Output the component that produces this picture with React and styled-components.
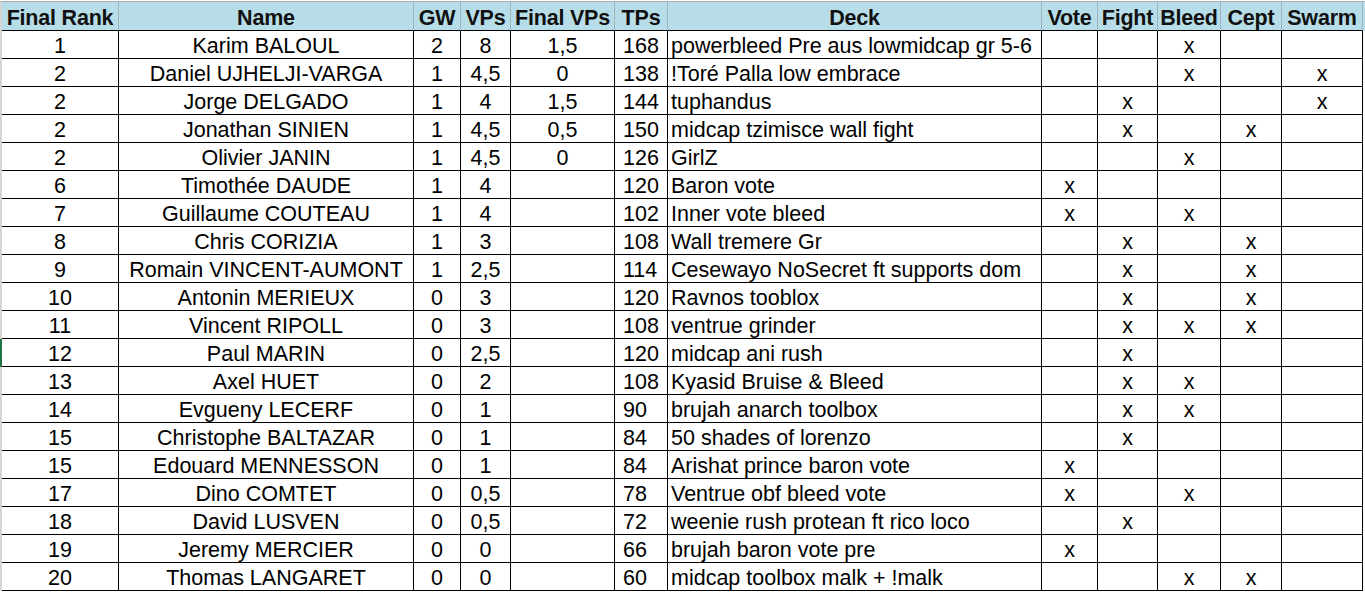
import React from 'react'
import styled, { createGlobalStyle } from 'styled-components'

const GlobalStyle = createGlobalStyle`
  html, body {
    margin: 0;
    padding: 0;
    background: #ffffff;
  }
  body {
    font-family: "Liberation Sans", Arial, sans-serif;
  }
`

const COLS = '117px 295px 47px 50px 104px 53px 374px 56px 60px 63px 61px 81px'

const Sheet = styled.div`
  padding-top: 1px;
  width: 1365px;
  color: #000;
  font-size: 21.5px;
`

const Row = styled.div`
  display: grid;
  grid-template-columns: ${COLS};
  height: ${p => (p.$head ? '29px' : '28px')};
  border-left: 2px solid ${p => (p.$active ? '#217346' : '#d4d4d4')};
  border-top: ${p => (p.$head ? '1px solid #a9a9a9' : 'none')};
  background: ${p => (p.$head ? '#b7dee8' : '#ffffff')};
`

const Cell = styled.div`
  display: flex;
  align-items: center;
  justify-content: ${p => p.$align || 'center'};
  padding-left: ${p => p.$pad || 0};
  padding-top: 3px;
  border-right: 1px solid #000;
  border-bottom: 1px solid #000;
  white-space: nowrap;
  overflow: hidden;
  line-height: 24px;
`

const HeadCell = styled(Cell)`
  font-weight: bold;
  color: #111;
  border-right-color: #9fb3ba;
  letter-spacing: -0.2px;
`

const headers = ['Final Rank', 'Name', 'GW', 'VPs', 'Final VPs', 'TPs', 'Deck', 'Vote', 'Fight', 'Bleed', 'Cept', 'Swarm']

// tags: V vote, F fight, B bleed, C cept, S swarm
const players = [
  ['1', 'Karim BALOUL', '2', '8', '1,5', '168', 'powerbleed Pre aus lowmidcap gr 5-6', 'B'],
  ['2', 'Daniel UJHELJI-VARGA', '1', '4,5', '0', '138', '!Toré Palla low embrace', 'BS'],
  ['2', 'Jorge DELGADO', '1', '4', '1,5', '144', 'tuphandus', 'FS'],
  ['2', 'Jonathan SINIEN', '1', '4,5', '0,5', '150', 'midcap tzimisce wall fight', 'FC'],
  ['2', 'Olivier JANIN', '1', '4,5', '0', '126', 'GirlZ', 'B'],
  ['6', 'Timothée DAUDE', '1', '4', '', '120', 'Baron vote', 'V'],
  ['7', 'Guillaume COUTEAU', '1', '4', '', '102', 'Inner vote bleed', 'VB'],
  ['8', 'Chris CORIZIA', '1', '3', '', '108', 'Wall tremere Gr', 'FC'],
  ['9', 'Romain VINCENT-AUMONT', '1', '2,5', '', '114', 'Cesewayo NoSecret ft supports dom', 'FC'],
  ['10', 'Antonin MERIEUX', '0', '3', '', '120', 'Ravnos tooblox', 'FC'],
  ['11', 'Vincent RIPOLL', '0', '3', '', '108', 'ventrue grinder', 'FBC'],
  ['12', 'Paul MARIN', '0', '2,5', '', '120', 'midcap ani rush', 'F'],
  ['13', 'Axel HUET', '0', '2', '', '108', 'Kyasid Bruise & Bleed', 'FB'],
  ['14', 'Evgueny LECERF', '0', '1', '', '90', 'brujah anarch toolbox', 'FB'],
  ['15', 'Christophe BALTAZAR', '0', '1', '', '84', '50 shades of lorenzo', 'F'],
  ['15', 'Edouard MENNESSON', '0', '1', '', '84', 'Arishat prince baron vote', 'V'],
  ['17', 'Dino COMTET', '0', '0,5', '', '78', 'Ventrue obf bleed vote', 'VB'],
  ['18', 'David LUSVEN', '0', '0,5', '', '72', 'weenie rush protean ft rico loco', 'F'],
  ['19', 'Jeremy MERCIER', '0', '0', '', '66', 'brujah baron vote pre', 'V'],
  ['20', 'Thomas LANGARET', '0', '0', '', '60', 'midcap toolbox malk + !malk', 'BC'],
]

const App = () => {
  return (
    <>
      <GlobalStyle />
      <Sheet>
        <Row $head>
          {headers.map(h => (
            <HeadCell key={h}>{h}</HeadCell>
          ))}
        </Row>
        {players.map((p, i) => {
          const [rank, name, gw, vps, fvps, tps, deck, tags] = p
          return (
            <Row key={i} $active={i === 11}>
              <Cell>{rank}</Cell>
              <Cell>{name}</Cell>
              <Cell>{gw}</Cell>
              <Cell>{vps}</Cell>
              <Cell>{fvps}</Cell>
              <Cell $align="flex-start" $pad="8px">{tps}</Cell>
              <Cell $align="flex-start" $pad="3px">{deck}</Cell>
              {['V', 'F', 'B', 'C', 'S'].map(t => (
                <Cell key={t}>{tags.includes(t) ? 'x' : ''}</Cell>
              ))}
            </Row>
          )
        })}
      </Sheet>
    </>
  )
}

export default App
